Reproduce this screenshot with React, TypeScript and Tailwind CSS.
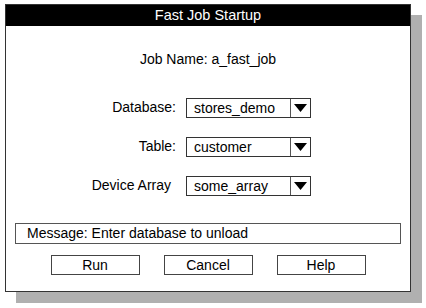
// Fields in the startup form
const fields = [
  { label: 'Database:', value: 'stores_demo', pad: '' },
  { label: 'Table:', value: 'customer', pad: '' },
  { label: 'Device Array', value: 'some_array', pad: 'pr-[5px]' },
]

const buttons = ['Run', 'Cancel', 'Help']

function Caret() {
  return (
    <svg width="13" height="8" viewBox="0 0 13 8" aria-hidden>
      <polygon points="0,0 13,0 6.5,8" fill="#000" />
    </svg>
  )
}

function SelectBox({ value }: { value: string }) {
  return (
    <div className="flex h-[20px] w-[125px] border border-[#333]">
      <div className="flex flex-1 items-center pl-[7px] leading-none">{value}</div>
      <div className="flex w-[20px] items-center justify-center border-l border-[#555]">
        <Caret />
      </div>
    </div>
  )
}

export default function App() {
  return (
    <div className="h-[308px] w-[426px] bg-white pt-[4px] pl-[5px] font-['Liberation_Sans',Arial,sans-serif] text-[14px] text-black">
      <div className="flex h-[288px] w-[406px] flex-col border border-[#333] bg-white shadow-[11px_11px_0_#b0b0b0]">
        <div className="flex h-[21px] items-center justify-center bg-black text-[14.5px] text-white">
          Fast Job Startup
        </div>

        <div className="mt-[25px] text-center leading-[16px]">Job Name: a_fast_job</div>

        <div className="mt-[30px] flex flex-col gap-[18px]">
          {fields.map((f) => (
            <div key={f.label} className="flex items-center">
              <div className={`w-[170px] text-right ${f.pad}`}>{f.label}</div>
              <div className="ml-[10px]">
                <SelectBox value={f.value} />
              </div>
            </div>
          ))}
        </div>

        <div className="mx-[9px] mt-[27px] flex h-[21px] items-center border border-[#555] pl-[11px]">
          Message: Enter database to unload
        </div>

        <div className="mt-[11px] flex justify-center gap-[24px]">
          {buttons.map((b) => (
            <button
              key={b}
              className="flex h-[20px] w-[89px] items-center justify-center border border-[#444] bg-white"
            >
              {b}
            </button>
          ))}
        </div>
      </div>
    </div>
  )
}
